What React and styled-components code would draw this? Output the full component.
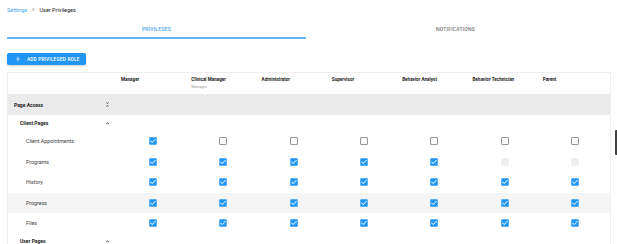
import React from "react";
import styled, { createGlobalStyle } from "styled-components";

const GlobalStyle = createGlobalStyle`
  html, body {
    margin: 0;
    padding: 0;
    background: #ffffff;
    font-family: Roboto, "Liberation Sans", sans-serif;
    overflow: hidden;
  }
`;

const roles = [
  { name: "Manager" },
  { name: "Clinical Manager", sub: "Manager" },
  { name: "Administrator" },
  { name: "Supervisor" },
  { name: "Behavior Analyst" },
  { name: "Behavior Technician" },
  { name: "Parent" },
];

// 1 = checked, 0 = empty, 2 = disabled
const clientPages = [
  { label: "Client Appointments", values: [1, 0, 0, 0, 0, 0, 0] },
  { label: "Programs", values: [1, 1, 1, 1, 1, 2, 2] },
  { label: "History", values: [1, 1, 1, 1, 1, 1, 1] },
  { label: "Progress", values: [1, 1, 1, 1, 1, 1, 1], shaded: true },
  { label: "Files", values: [1, 1, 1, 1, 1, 1, 1] },
];

const Page = styled.div`
  position: relative;
  width: 617px;
  height: 244px;
  padding: 0 6px 0 7px;
  box-sizing: border-box;
`;

const Breadcrumb = styled.div`
  display: flex;
  align-items: center;
  gap: 5px;
  height: 9px;
  padding-top: 5px;
  font-size: 5.5px;
  color: #212121;
`;

const Crumb = styled.span`
  color: ${(p) => (p.$link ? "#42a5f5" : "#212121")};
`;

const Sep = styled.span`
  color: #757575;
  font-size: 8px;
  line-height: 8px;
`;

const Tabs = styled.div`
  display: flex;
  margin-top: 5px;
  width: 598px;
`;

const Tab = styled.div`
  flex: 1;
  height: 17px;
  padding-top: 1px;
  display: flex;
  align-items: center;
  justify-content: center;
  font-size: 5px;
  font-weight: 500;
  letter-spacing: 0.2px;
  color: ${(p) => (p.$active ? "#42a5f5" : "#757575")};
  border-bottom: 2px solid ${(p) => (p.$active ? "#64b5f6" : "transparent")};
`;

const AddButton = styled.button`
  margin-top: 14px;
  display: flex;
  align-items: center;
  gap: 5px;
  width: 79px;
  height: 12px;
  padding: 0 0 0 7px;
  border: none;
  border-radius: 2px;
  background: #2196f3;
  color: #ffffff;
  font-family: inherit;
  font-size: 4.8px;
  font-weight: 500;
  letter-spacing: 0.15px;
  box-shadow: 0 1px 2px rgba(0, 0, 0, 0.2);
`;

const Card = styled.div`
  margin-top: 7px;
  width: 604px;
  border: 1px solid #eeeeee;
  border-bottom: none;
  box-sizing: border-box;
`;

const Row = styled.div`
  display: grid;
  grid-template-columns: 110px repeat(7, 1fr);
  align-items: center;
  height: ${(p) => p.$h}px;
  background: ${(p) => p.$bg || "transparent"};
`;

const HeadCell = styled.div`
  align-self: start;
  padding: 4px 0 0 3px;
  font-size: 4.6px;
  font-weight: 700;
  color: #212121;
`;

const SubTitle = styled.div`
  margin-top: 2px;
  font-size: 4px;
  font-weight: 400;
  color: #9e9e9e;
`;

const LabelCell = styled.div`
  display: flex;
  align-items: center;
  justify-content: space-between;
  padding: 0 7px 0 ${(p) => p.$indent}px;
  font-size: ${(p) => (p.$bold ? 5 : 5.3)}px;
  font-weight: ${(p) => (p.$bold ? 700 : 400)};
  color: ${(p) => (p.$bold ? "#212121" : "#424242")};
`;

const BoxCell = styled.div`
  display: flex;
  justify-content: center;
  align-items: center;
`;

const Handle = styled.div`
  position: absolute;
  right: 0;
  top: 130px;
  width: 2px;
  height: 25px;
  border-radius: 1px 0 0 1px;
  background: #424242;
`;

const UnfoldLess = () => (
  <svg width="7" height="7" viewBox="0 0 24 24" fill="#424242">
    <path d="M7.41 18.59L8.83 20 12 16.83 15.17 20l1.41-1.41L12 14l-4.59 4.59zm9.18-13.18L15.17 4 12 7.17 8.83 4 7.41 5.41 12 10l4.59-4.59z" />
  </svg>
);

const ExpandLess = () => (
  <svg width="7" height="7" viewBox="0 0 24 24" fill="#424242">
    <path d="M12 8l-6 6 1.41 1.41L12 10.83l4.59 4.58L18 14z" />
  </svg>
);

const Plus = () => (
  <svg width="8" height="8" viewBox="0 0 24 24" fill="#ffffff">
    <path d="M19 13h-6v6h-2v-6H5v-2h6V5h2v6h6v2z" />
  </svg>
);

const Check = ({ state }) => {
  if (state === 1) {
    return (
      <svg width="10" height="10" viewBox="0 0 24 24">
        <rect x="3" y="3" width="18" height="18" rx="2" fill="#2196f3" />
        <path d="M10 17l-5-5 1.41-1.41L10 14.17l7.59-7.59L19 8z" fill="#ffffff" />
      </svg>
    );
  }
  if (state === 2) {
    return (
      <svg width="10" height="10" viewBox="0 0 24 24">
        <rect x="3" y="3" width="18" height="18" rx="2" fill="#eeeeee" />
      </svg>
    );
  }
  return (
    <svg width="10" height="10" viewBox="0 0 24 24" fill="#757575">
      <path d="M19 5v14H5V5h14m0-2H5c-1.1 0-2 .9-2 2v14c0 1.1.9 2 2 2h14c1.1 0 2-.9 2-2V5c0-1.1-.9-2-2-2z" />
    </svg>
  );
};

const App = () => {
  return (
    <>
      <GlobalStyle />
      <Page>
        <Breadcrumb>
          <Crumb $link>Settings</Crumb>
          <Sep>›</Sep>
          <Crumb>User Privileges</Crumb>
        </Breadcrumb>
        <Tabs>
          <Tab $active>PRIVILEGES</Tab>
          <Tab>NOTIFICATIONS</Tab>
        </Tabs>
        <AddButton>
          <Plus />
          ADD PRIVILEGED ROLE
        </AddButton>
        <Card>
          <Row $h={21}>
            <div />
            {roles.map((r) => (
              <HeadCell key={r.name}>
                {r.name}
                {r.sub && <SubTitle>{r.sub}</SubTitle>}
              </HeadCell>
            ))}
          </Row>
          <Row $h={21} $bg="#ebebeb">
            <LabelCell $indent={6} $bold>
              Page Access
              <UnfoldLess />
            </LabelCell>
          </Row>
          <Row $h={16}>
            <LabelCell $indent={12} $bold>
              Client Pages
              <ExpandLess />
            </LabelCell>
          </Row>
          {clientPages.map((row) => (
            <Row key={row.label} $h={20.5} $bg={row.shaded ? "#f5f5f5" : null}>
              <LabelCell $indent={18}>{row.label}</LabelCell>
              {row.values.map((v, i) => (
                <BoxCell key={i}>
                  <Check state={v} />
                </BoxCell>
              ))}
            </Row>
          ))}
          <Row $h={15}>
            <LabelCell $indent={12} $bold>
              User Pages
              <ExpandLess />
            </LabelCell>
          </Row>
        </Card>
        <Handle />
      </Page>
    </>
  );
};

export default App;
